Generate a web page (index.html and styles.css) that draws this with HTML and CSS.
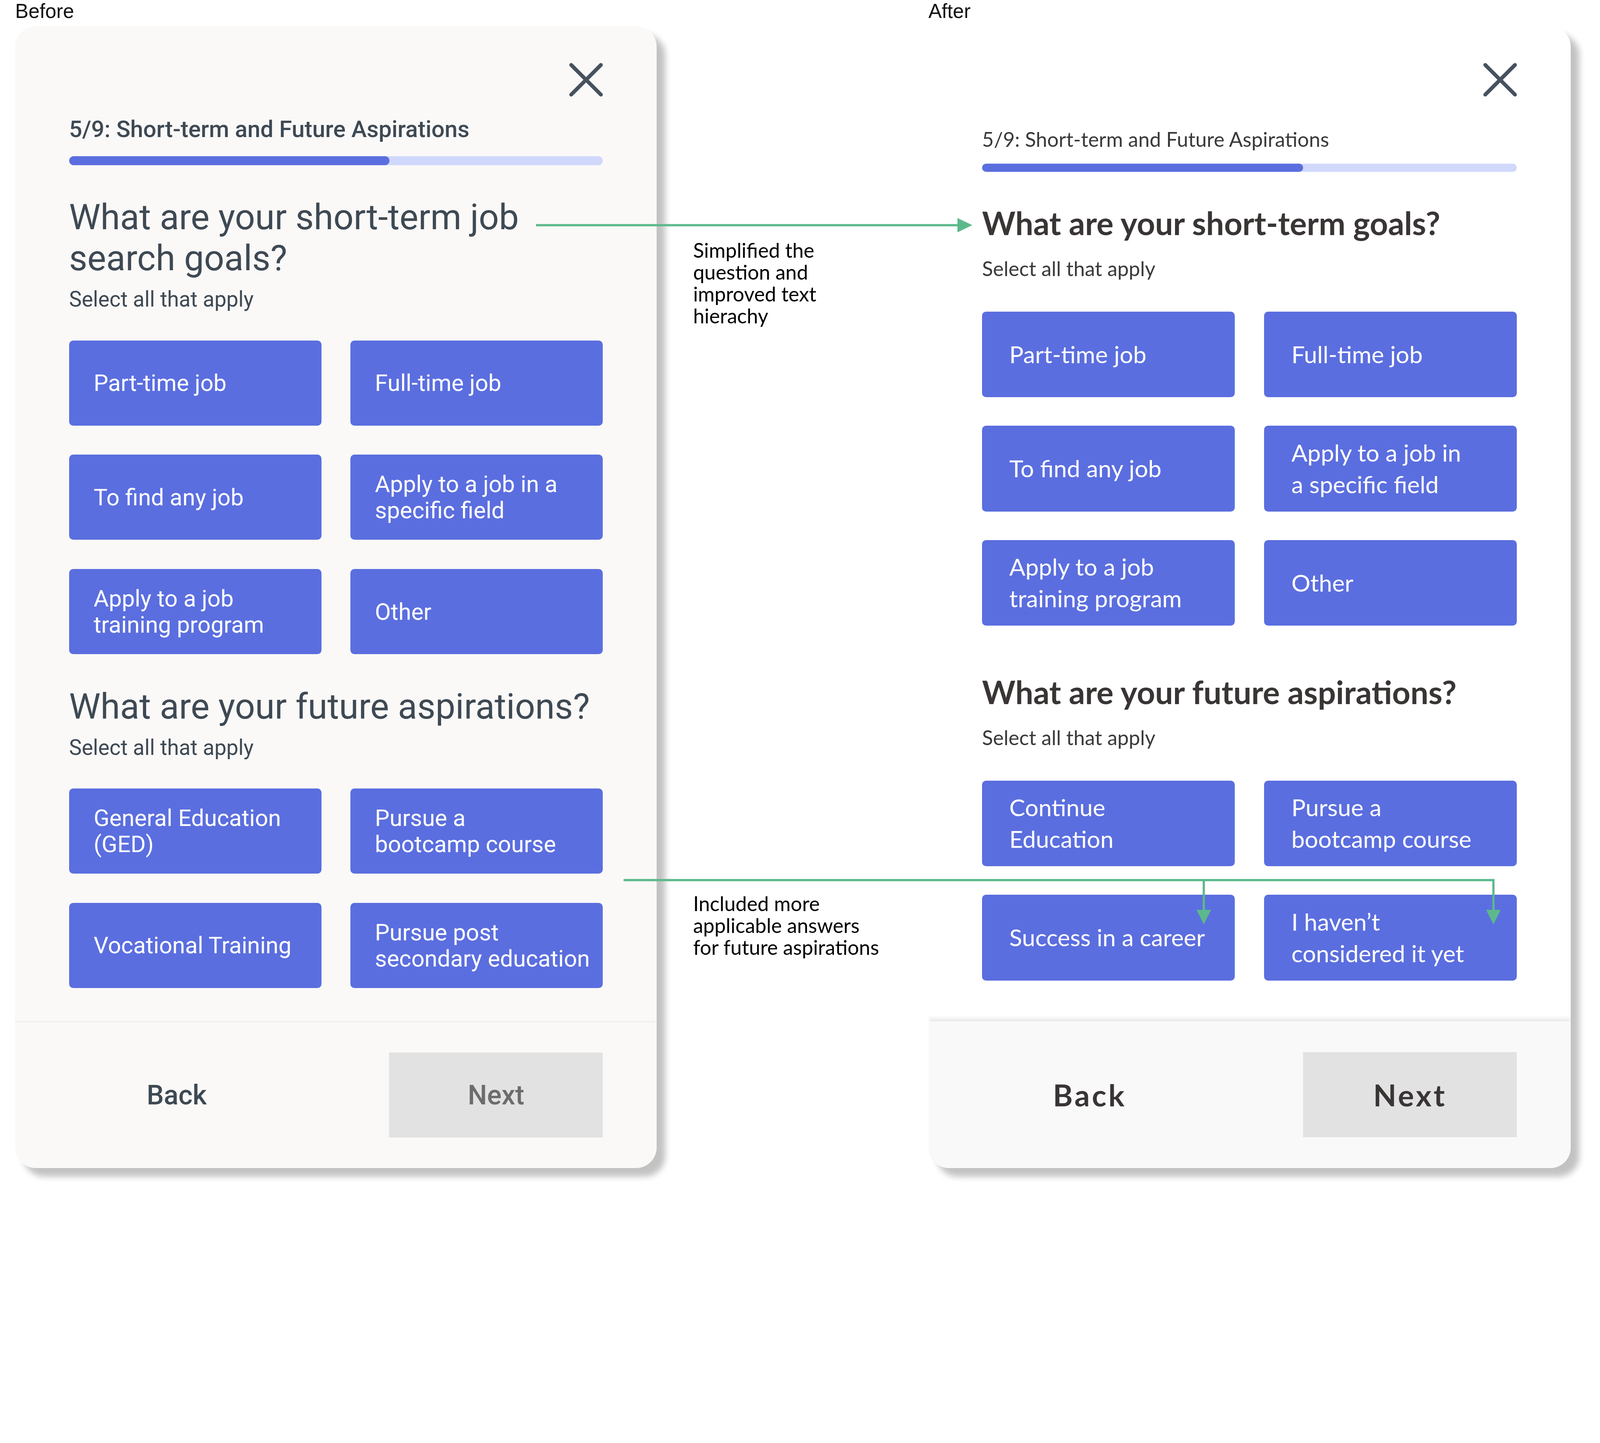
FILE: index.html
```html
<!DOCTYPE html>
<html lang="en">
<head>
<meta charset="utf-8">
<meta name="viewport" content="width=device-width, initial-scale=1">
<title>Short-term and Future Aspirations – Before / After</title>
<link rel="stylesheet" href="styles.css">
</head>
<body>
<div class="canvas">
  <section class="col col-before">
    <div class="label">Before</div>
    <div class="panel panel-before">
      <div class="panel-main">
        <div class="close-row">
          <svg class="close" viewBox="0 0 33 33" aria-label="Close"><path d="M2 2 L31 31 M31 2 L2 31"/></svg>
        </div>
        <div class="step">5/9: Short-term and Future Aspirations</div>
        <div class="bar"><div class="bar-fill" style="width:60%"></div></div>
        <h2 class="q">What are your short-term job search goals?</h2>
        <div class="sub">Select all that apply</div>
        <div class="grid">
          <div class="opt">Part-time job</div>
          <div class="opt">Full-time job</div>
          <div class="opt">To find any job</div>
          <div class="opt">Apply to a job in a<br>specific field</div>
          <div class="opt">Apply to a job<br>training program</div>
          <div class="opt">Other</div>
        </div>
        <h2 class="q q2">What are your future aspirations?</h2>
        <div class="sub">Select all that apply</div>
        <div class="grid">
          <div class="opt">General Education<br>(GED)</div>
          <div class="opt">Pursue a<br>bootcamp course</div>
          <div class="opt">Vocational Training</div>
          <div class="opt">Pursue post<br>secondary education</div>
        </div>
      </div>
      <div class="footer">
        <div class="back">Back</div>
        <div class="next">Next</div>
      </div>
    </div>
  </section>

  <aside class="notes">
    <p class="note note-1">Simplified the<br>question and<br>improved text<br>hierachy</p>
    <p class="note note-2">Included more<br>applicable answers<br>for future aspirations</p>
  </aside>

  <section class="col col-after">
    <div class="label">After</div>
    <div class="panel panel-after">
      <div class="panel-main">
        <div class="close-row">
          <svg class="close" viewBox="0 0 33 33" aria-label="Close"><path d="M2 2 L31 31 M31 2 L2 31"/></svg>
        </div>
        <div class="step">5/9: Short-term and Future Aspirations</div>
        <div class="bar"><div class="bar-fill" style="width:60%"></div></div>
        <h2 class="q">What are your short-term goals?</h2>
        <div class="sub">Select all that apply</div>
        <div class="grid">
          <div class="opt">Part-time job</div>
          <div class="opt">Full-time job</div>
          <div class="opt">To find any job</div>
          <div class="opt">Apply to a job in<br>a specific field</div>
          <div class="opt">Apply to a job<br>training program</div>
          <div class="opt">Other</div>
        </div>
        <h2 class="q q2">What are your future aspirations?</h2>
        <div class="sub">Select all that apply</div>
        <div class="grid">
          <div class="opt">Continue<br>Education</div>
          <div class="opt">Pursue a<br>bootcamp course</div>
          <div class="opt">Success in a career</div>
          <div class="opt">I haven’t<br>considered it yet</div>
        </div>
      </div>
      <div class="footer">
        <div class="back">Back</div>
        <div class="next">Next</div>
      </div>
    </div>
  </section>

  <svg class="connectors" viewBox="0 0 1560 1168" aria-hidden="true">
    <path d="M522.6 219.6 H935"/>
    <polygon points="933.5,212.6 948,219.6 933.5,226.6"/>
    <path d="M608 858.3 H1456.1 V889"/>
    <path d="M1173.7 858.3 V889"/>
    <polygon points="1166.6,887.3 1180.8,887.3 1173.7,901.5"/>
    <polygon points="1449,887.3 1463.2,887.3 1456.1,901.5"/>
  </svg>
</div>
<script src="script.js"></script>
</body>
</html>
```

FILE: styles.css
```css
* { box-sizing: border-box; }

html, body {
  margin: 0;
  padding: 0;
  background: #ffffff;
  overflow: hidden;
}

/* design is drawn on a 1560 x 1168 board, scaled to the window width by script.js */
.canvas {
  zoom: 3.16474;
  position: relative;
  width: 1560px;
  height: 1167px;
  display: flex;
  align-items: flex-start;
  padding-left: 14.8px;
  overflow: hidden;
  font-family: Roboto, "Liberation Sans", sans-serif;
}

/* columns */
.col-before { width: 625.5px; flex: none; }
.notes { margin-left: 35.5px; width: 200px; flex: none; padding-top: 233.4px; }
.col-after { margin-left: 29.4px; width: 626.3px; flex: none; }

.label {
  height: 25.5px;
  font-family: "Liberation Sans", Arial, sans-serif;
  font-size: 19.5px;
  line-height: 22px;
  color: #111111;
}

/* annotations */
.note {
  margin: 0;
  font-family: Lato, "Open Sans", sans-serif;
  font-size: 19.7px;
  line-height: 21.3px;
  color: #000000;
}
.note-2 { margin-top: 552px; }

/* panels */
.panel {
  height: 1113.5px;
  border-radius: 20px;
  display: flex;
  flex-direction: column;
  overflow: hidden;
  box-shadow: 8px 8px 6px rgba(0, 0, 0, 0.24);
}

.panel-main {
  flex: 1;
  display: flex;
  flex-direction: column;
  padding: 36px 52.5px 0 52.5px;
}

.close-row {
  display: flex;
  justify-content: flex-end;
  height: 33px;
}
.close { width: 33px; height: 33px; display: block; }
.close path {
  fill: none;
  stroke: #46525e;
  stroke-width: 3.7;
  stroke-linecap: round;
}

.bar {
  background: #d0d9fb;
  border-radius: 5px;
  overflow: hidden;
}
.bar-fill {
  height: 100%;
  background: #5b6edf;
  border-radius: 5px;
}

.q { margin: 0; }

.grid {
  display: grid;
  grid-template-columns: 1fr 1fr;
}

.opt {
  background: #5b6edf;
  color: #ffffff;
  border-radius: 4px;
  display: flex;
  align-items: center;
  white-space: nowrap;
}

.footer {
  height: 143px;
  flex: none;
  display: flex;
  align-items: center;
  justify-content: space-between;
  padding: 0 52.5px;
}
.back { width: 210px; text-align: center; }
.next {
  width: 208.4px;
  height: 83px;
  background: #e2e2e2;
  display: flex;
  align-items: center;
  justify-content: center;
}

/* ---------- Before ---------- */
.panel-before {
  background: #faf9f8;
  color: #3e4953;
}
.panel-before .step { margin-top: 19.3px; font-size: 22.6px; line-height: 24px; font-weight: 500; }
.panel-before .bar { margin-top: 14.7px; height: 8.5px; }
.panel-before .q { margin-top: 31px; font-size: 34.6px; line-height: 40px; font-weight: 400; }
.panel-before .sub { margin-top: 8px; font-size: 20.8px; line-height: 24px; }
.panel-before .grid {
  margin-top: 28px;
  grid-auto-rows: 83px;
  row-gap: 28.5px;
  column-gap: 28px;
}
.panel-before .opt { padding-left: 24px; font-size: 22.6px; line-height: 25.6px; }
.panel-before .footer { border-top: 1px solid #ebebeb; }
.panel-before .back,
.panel-before .next { font-size: 26.5px; font-weight: 500; }
.panel-before .back { color: #3e4953; }
.panel-before .next { color: #6c6c6c; }

/* ---------- After ---------- */
.panel-after {
  background: #ffffff;
  color: #3a3535;
  font-family: Lato, "Open Sans", sans-serif;
}
.panel-after .panel-main { padding: 36px 52.5px 0 52.3px; }
.panel-after .step { margin-top: 29.4px; font-size: 19.8px; line-height: 24px; color: #3a3a3a; }
.panel-after .bar { margin-top: 11.5px; height: 8.3px; }
.panel-after .q { margin-top: 29.7px; font-size: 31.1px; line-height: 40px; font-weight: 700; }
.panel-after .q2 { margin-top: 44.6px; }
.panel-after .sub { margin-top: 12.5px; font-size: 19.8px; line-height: 24px; color: #3a3a3a; }
.panel-after .grid {
  margin-top: 29.9px;
  grid-auto-rows: 83.6px;
  row-gap: 27.8px;
  column-gap: 28.5px;
}
.panel-after .opt { padding-left: 26.6px; font-size: 23.2px; line-height: 30.8px; }
.panel-after .footer {
  background: #f9f9f9;
  box-shadow: 0 -2px 5px rgba(0, 0, 0, 0.12);
  padding: 0 52.5px 0 52.3px;
}
.panel-after .back,
.panel-after .next {
  font-size: 29.3px;
  font-weight: 700;
  letter-spacing: 2px;
  color: #3a3535;
}

/* connectors (diagram arrows lying over both panels) */
.connectors {
  position: absolute;
  left: 0;
  top: 0;
  width: 1560px;
  height: 1168px;
  pointer-events: none;
}
.connectors path {
  fill: none;
  stroke: #5cb98b;
  stroke-width: 2.2;
  stroke-linejoin: miter;
}
.connectors polygon { fill: #5cb98b; }
```

FILE: script.js
```js
(function () {
  var board = document.querySelector('.canvas');
  function fit() {
    var w = document.documentElement.clientWidth || window.innerWidth;
    board.style.zoom = String(w / 1560);
  }
  fit();
  window.addEventListener('resize', fit);
})();
```
